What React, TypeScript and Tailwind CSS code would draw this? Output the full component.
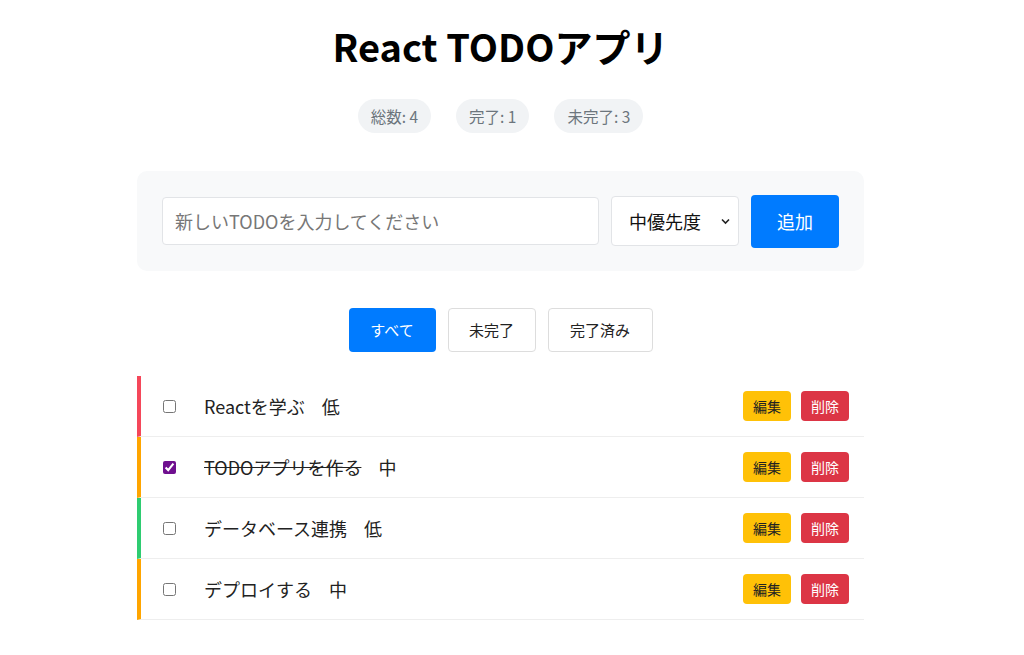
import { useState } from "react";

interface Todo {
  id: number;
  text: string;
  done: boolean;
  priority: "高" | "中" | "低";
  color: string;
}

const initial: Todo[] = [
  { id: 1, text: "Reactを学ぶ", done: false, priority: "低", color: "border-l-[#f5475a]" },
  { id: 2, text: "TODOアプリを作る", done: true, priority: "中", color: "border-l-[#ffa500]" },
  { id: 3, text: "データベース連携", done: false, priority: "低", color: "border-l-[#2ecc71]" },
  { id: 4, text: "デプロイする", done: false, priority: "中", color: "border-l-[#ffa500]" },
];

export default function App() {
  const [todos, setTodos] = useState<Todo[]>(initial);
  const [filter, setFilter] = useState("all");

  const done = todos.filter((t) => t.done).length;

  const toggle = (id: number) =>
    setTodos((prev) => prev.map((t) => (t.id === id ? { ...t, done: !t.done } : t)));

  const filters = [
    { key: "all", label: "すべて", w: "w-[87px]" },
    { key: "active", label: "未完了", w: "w-[88px]" },
    { key: "done", label: "完了済み", w: "w-[105px]" },
  ];

  return (
    <div
      className="min-h-screen bg-white text-[#222]"
      style={{ fontFamily: '"Noto Sans CJK JP", "Noto Sans", sans-serif' }}
    >
      <div className="ml-[137px] w-[727px] pt-[22px]">
        <h1 className="text-center text-[38px] leading-[48px] font-bold text-black">React TODOアプリ</h1>

        <div className="mt-[29px] flex justify-center gap-[25px]">
          {[`総数: ${todos.length}`, `完了: ${done}`, `未完了: ${todos.length - done}`].map((s) => (
            <span
              key={s}
              className="h-[34px] px-[13px] rounded-full bg-[#f1f3f5] text-[15.5px] leading-[34px] text-[#6c757d]"
            >
              {s}
            </span>
          ))}
        </div>

        <div className="mt-[38px] h-[100px] rounded-[10px] bg-[#f8f9fa] px-[25px] flex items-center gap-[12px]">
          <input
            className="flex-1 h-[48px] rounded-[4px] border border-[#e2e4e7] bg-white px-[12px] text-[18px] outline-none placeholder:text-[#777]"
            placeholder="新しいTODOを入力してください"
          />
          <div className="relative w-[128px] h-[50px] rounded-[4px] border border-[#e2e4e7] bg-white flex items-center">
            <span className="pl-[17px] text-[18px] text-[#111]">中優先度</span>
            <svg className="absolute right-[8px] top-[21px]" width="9" height="7" viewBox="0 0 9 7">
              <path d="M1 1.5 L4.5 5 L8 1.5" fill="none" stroke="#222" strokeWidth="1.6" />
            </svg>
          </div>
          <button className="w-[88px] h-[53px] rounded-[4px] bg-[#007bff] text-white text-[18px]">追加</button>
        </div>

        <div className="mt-[37px] flex justify-center gap-[12px]">
          {filters.map((f) => (
            <button
              key={f.key}
              onClick={() => setFilter(f.key)}
              className={`${f.w} h-[44px] rounded-[4px] text-[15px] ${
                filter === f.key ? "bg-[#007bff] text-white" : "bg-white border border-[#ddd] text-[#222]"
              }`}
            >
              {f.label}
            </button>
          ))}
        </div>

        <ul className="mt-[24px]">
          {todos.map((t) => (
            <li
              key={t.id}
              className={`h-[61px] flex items-center border-l-4 ${t.color} border-b border-b-[#eee] pl-[22px] pr-[15px]`}
            >
              <input
                type="checkbox"
                checked={t.done}
                onChange={() => toggle(t.id)}
                className="w-[13px] h-[13px] accent-[#6f0f8f]"
              />
              <span className={`ml-[28px] text-[18px] text-[#222] ${t.done ? "line-through" : ""}`}>{t.text}</span>
              <span className="ml-[17px] text-[18px] text-[#222]">{t.priority}</span>
              <div className="ml-auto flex gap-[10px]">
                <button className="w-[48px] h-[30px] rounded-[4px] bg-[#ffc107] text-[14px] text-[#222]">編集</button>
                <button className="w-[48px] h-[30px] rounded-[4px] bg-[#dc3545] text-[14px] text-white">削除</button>
              </div>
            </li>
          ))}
        </ul>
      </div>
    </div>
  );
}
